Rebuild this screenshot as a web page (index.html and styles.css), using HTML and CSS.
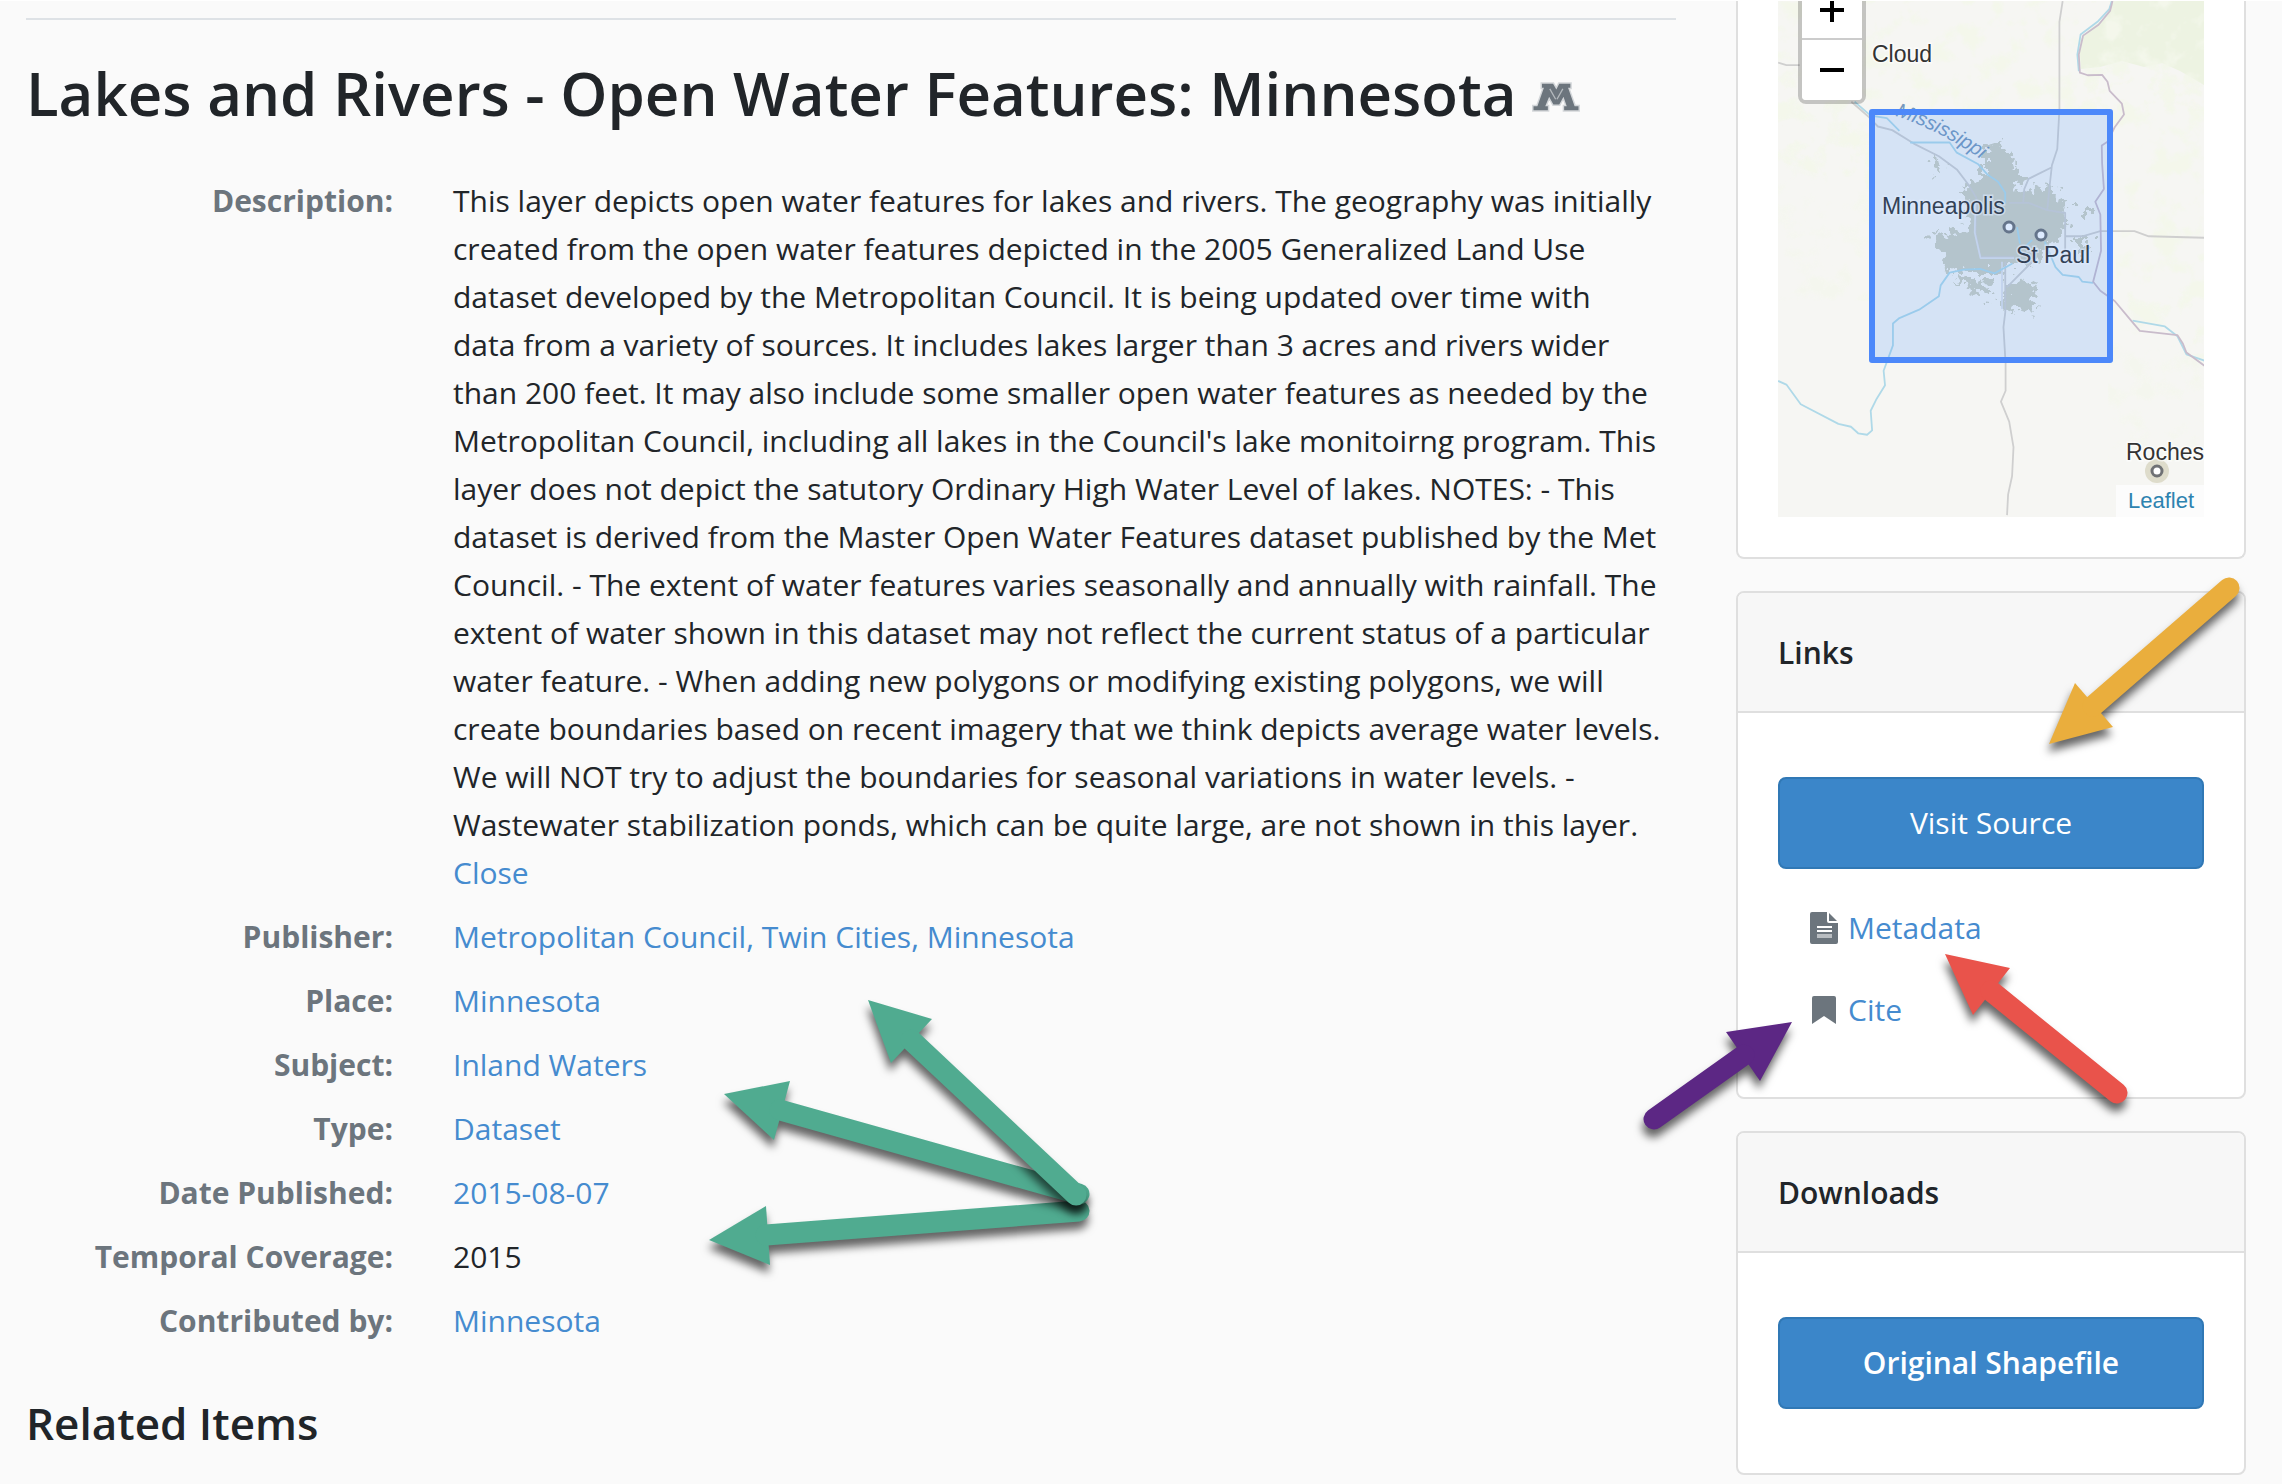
FILE: index.html
```html
<!DOCTYPE html>
<html lang="en">
<head>
<meta charset="utf-8">
<title>Lakes and Rivers - Open Water Features: Minnesota</title>
<link rel="stylesheet" href="styles.css">
</head>
<body>
<div class="page">
  <main class="record">
    <hr class="rule">
    <h1 class="title">Lakes and Rivers - Open Water Features: Minnesota
      <svg class="institution" viewBox="20 33 146 92" aria-hidden="true">
        <path class="institution-body" d="M50 38H84L94 56L103 38H137V51H130L150 107H162V120H118V107H126L116 78L103 102H85L72 78L60 107H68V120H24V107H36L56 51H50Z"/>
        <path class="institution-seam" d="M74 54L92 86M114 54L96 86"/>
      </svg>
    </h1>
    <dl class="fields">
      <dt>Description:</dt>
      <dd>This layer depicts open water features for lakes and rivers. The geography was initially created from the open water features depicted in the 2005 Generalized Land Use dataset developed by the Metropolitan Council. It is being updated over time with <span class="together">data from</span> a variety of sources. It includes lakes larger than 3 acres and rivers wider than 200 feet. It may also include some smaller open water features as needed by the Metropolitan Council, including all lakes in the Council's lake monitoirng program. This layer does not depict the satutory Ordinary High Water Level of lakes. NOTES: - This dataset is derived from the Master Open Water Features dataset published by the Met Council. - The extent of water features varies seasonally and annually with rainfall. The extent of water shown in this dataset may not reflect the current status of a particular water feature. - When adding new polygons or modifying existing polygons, we will create boundaries based on recent imagery that we think depicts average water levels. We will NOT try to adjust the boundaries for seasonal variations in water levels. - Wastewater stabilization ponds, which can be quite large, are not shown in this layer. <a class="close" href="#">Close</a></dd>
      <dt>Publisher:</dt>
      <dd><a href="#">Metropolitan Council, Twin Cities, Minnesota</a></dd>
      <dt>Place:</dt>
      <dd><a href="#">Minnesota</a></dd>
      <dt>Subject:</dt>
      <dd><a href="#">Inland Waters</a></dd>
      <dt>Type:</dt>
      <dd><a href="#">Dataset</a></dd>
      <dt>Date Published:</dt>
      <dd><a href="#">2015-08-07</a></dd>
      <dt>Temporal Coverage:</dt>
      <dd>2015</dd>
      <dt>Contributed by:</dt>
      <dd><a href="#">Minnesota</a></dd>
    </dl>
    <h2 class="related">Related Items</h2>
  </main>

  <aside class="sidebar">
    <section class="card card-map">
      <div class="map">
        <svg class="tiles" viewBox="0 0 426 516" preserveAspectRatio="xMinYMin slice" role="img" aria-label="Map of the Minneapolis and St Paul area">
          <defs>
            <filter id="grain" x="0" y="0" width="100%" height="100%">
              <feTurbulence type="fractalNoise" baseFrequency="0.04" numOctaves="4" seed="8"/>
              <feColorMatrix values="0 0 0 0 0.90  0 0 0 0 0.93  0 0 0 0 0.83  5 0 0 0 -2.5"/>
              <feComposite operator="in" in2="SourceGraphic"/>
            </filter>
            <filter id="ragged" x="-20%" y="-20%" width="140%" height="140%">
              <feTurbulence type="fractalNoise" baseFrequency="0.12" numOctaves="3" seed="4"/>
              <feDisplacementMap in="SourceGraphic" scale="30" xChannelSelector="R" yChannelSelector="G"/>
            </filter>
            <path id="river-label" d="M117 115Q165 130 214 166"/>
          </defs>
          <rect width="426" height="516" fill="#f6f6f3"/>
          <path filter="url(#grain)" d="M0 0H426V360L340 300L330 110H94V190L0 160Z"/>
          <path fill="#edf3e2" d="M336 0H426V84L402 70L384 62L366 66L344 60L322 66L303 68L301 40L312 28L326 18Z"/>
          <path filter="url(#grain)" d="M300 0H426V110H300Z"/>
          <path opacity=".5" filter="url(#grain)" d="M0 60H94V300H0ZM330 290H426V460H330Z"/>
          <g filter="url(#ragged)" fill="#ced0c2">
            <path d="M206 150L224 142L244 172L238 192L262 184L284 196L290 228L268 246L256 262L230 262L222 272L188 272L168 266L158 240L166 232L192 226L190 200L180 188L206 178Z"/>
            <path d="M238 278L262 284L252 300L256 312L238 306L228 312L222 296ZM174 274L196 282L214 280L212 296L196 290L184 284ZM296 238H310V248H296Z"/>
            <path d="M158 154L164 162L160 176L155 166ZM150 230L160 226L156 236ZM304 204H316V214H304Z"/>
          </g>
          <g transform="translate(-58 -1) scale(.3588 .3635)" fill="none" stroke-width="5" stroke-linejoin="round">
            <path stroke="#cfcfcf" d="M162 172L185 179H222M366 280L415 322L440 348L480 358L540 395L610 430L660 466L690 505L715 545M955 3L946 60V300L940 410L925 455L920 500L912 578M925 460L860 492L848 520L845 560M805 558H860L912 578L962 586V690M962 650H1010L1060 636H1155L1195 650L1350 654M715 545L712 640L726 706H820M795 720V860L790 900L796 1000V1075L783 1105L806 1160L818 1230L814 1310L803 1360L800 1417M880 710L800 790"/>
            <path stroke="#dfe2ea" d="M712 560L710 640L726 710H820M786 720V850"/>
            <path stroke="#afd9e8" d="M1092 3L1085 25L1052 60L1005 95L996 150L1000 196M375 280L420 318L465 325L500 360M530 392H640L660 420L720 452L745 480L775 500L795 530V560M828 625L836 670M870 660L850 680M162 1048L185 1058L225 1112L330 1166L365 1174L385 1192L410 1196L424 1184L420 1130L435 1100L460 1060L456 1020L482 950V890L500 875L555 852L610 815L615 785L640 750L680 742L725 740L765 752L815 725M905 665L935 735L955 756L1000 762L1010 775L1040 778M1150 882L1240 898L1275 925L1300 975L1350 992"/>
            <path stroke="#c9bccb" d="M1094 3L1087 30L1055 68L1012 98L1000 150L1003 200L1025 207L1065 206L1080 225L1086 250L1120 285L1126 315L1100 350L1080 390L1064 400L1065 450L1070 520L1046 555L1060 590L1062 690L1040 775L1060 800L1100 828L1140 875L1170 910L1275 922L1290 945L1300 970L1350 1006"/>
          </g>
          <circle cx="379" cy="470" r="12" fill="#dedccb"/>
          <g fill="#fff" stroke="#6f7174" stroke-width="3">
            <circle cx="231" cy="226" r="5"/>
            <circle cx="263" cy="234" r="5"/>
            <circle cx="379" cy="470" r="5"/>
          </g>
          <g class="places">
            <text x="94" y="61">Cloud</text>
            <text x="104" y="213">Minneapolis</text>
            <text x="238" y="262">St Paul</text>
            <text x="348" y="459">Roches</text>
          </g>
          <text class="river"><textPath href="#river-label">Mississippi</textPath></text>
          <rect x="94" y="111" width="238" height="248" fill="#3388ff" fill-opacity=".17" stroke="#4c88fa" stroke-width="6" stroke-linejoin="round"/>
        </svg>
        <div class="zoom">
          <button class="zoom-button" type="button" aria-label="Zoom in"><svg viewBox="0 0 24 24"><path d="M0 12H24M12 0V24"/></svg></button>
          <button class="zoom-button" type="button" aria-label="Zoom out"><svg viewBox="0 0 24 24"><path d="M0 12H24"/></svg></button>
        </div>
        <a class="attribution" href="#">Leaflet</a>
      </div>
    </section>

    <section class="card">
      <h2 class="card-header">Links</h2>
      <div class="card-body">
        <button class="button" type="button">Visit Source</button>
        <ul class="links">
          <li>
            <svg class="icon" viewBox="0 0 28 32" aria-hidden="true"><path fill="#6c757d" fill-rule="evenodd" d="M2 0H17V9Q17 11 19 11H28V30Q28 32 26 32H2Q0 32 0 30V2Q0 0 2 0ZM7 14V16H22V14ZM7 18V20H22V18Z"/><path fill="#b9bdc1" d="M7 22H22V26H7Z"/><path fill="#6c757d" d="M19 1L27 9H19Z"/></svg>
            <a href="#">Metadata</a>
          </li>
          <li>
            <svg class="icon" viewBox="0 0 28 32" aria-hidden="true"><path fill="#6c757d" d="M4 2H24Q26 2 26 4V30L14 22L2 30V4Q2 2 4 2Z"/></svg>
            <a href="#">Cite</a>
          </li>
        </ul>
      </div>
    </section>

    <section class="card">
      <h2 class="card-header">Downloads</h2>
      <div class="card-body card-body-even">
        <button class="button button-strong" type="button">Original Shapefile</button>
      </div>
    </section>
  </aside>

  <svg class="arrows" viewBox="0 0 2282 1484" preserveAspectRatio="xMinYMin meet" aria-hidden="true">
    <g class="arrow arrow-green"><path d="M709 1240L766 1206L770 1265Z"/><line x1="766" y1="1235" x2="1079" y2="1211"/></g>
    <g class="arrow arrow-green"><path d="M724 1094L790 1081L774 1140Z"/><line x1="780" y1="1110" x2="1079" y2="1194"/></g>
    <g class="arrow arrow-green"><path d="M868 1000L932 1019L891 1063Z"/><line x1="911" y1="1040" x2="1076" y2="1195"/></g>
    <g class="arrow arrow-yellow"><path d="M2049 744L2075 683L2113 727Z"/><line x1="2093" y1="706" x2="2229" y2="588"/></g>
    <g class="arrow arrow-red"><path d="M1945 954L2010 968L1973 1015Z"/><line x1="1991" y1="991" x2="2117" y2="1093"/></g>
    <g class="arrow arrow-purple"><path d="M1792 1022L1726 1032L1760 1081Z"/><line x1="1744" y1="1055" x2="1654" y2="1119"/></g>
  </svg>
</div>
</body>
</html>
```
FILE: styles.css
```css
* {
  box-sizing: border-box;
}

body {
  margin: 0;
  border-top: 1px solid #fff;
  background: #fafafa;
  color: #212529;
  font: 30px/48px "Open Sans", "Noto Sans", sans-serif;
}

a {
  color: #458bcf;
  text-decoration: none;
}

.page {
  position: relative;
  display: grid;
  grid-template-columns: minmax(0, 1fr) 510px;
  gap: 60px;
  align-items: start;
  padding: 0 36px 0 26px;
}

.rule {
  margin: 17px 0 0;
  border: 0;
  border-top: 2px solid #dee2e6;
}

.title {
  margin: 35px 0 0;
  font-size: 60px;
  line-height: 76px;
  font-weight: 600;
  white-space: nowrap;
}

.institution {
  width: 48px;
  height: 30px;
  vertical-align: 4px;
}

.institution-body {
  fill: #6c757d;
  stroke: #d3d6d9;
  stroke-width: 9px;
  paint-order: stroke;
}

.institution-seam {
  fill: none;
  stroke: #b4b9bd;
  stroke-width: 4px;
}

.fields {
  display: grid;
  grid-template-columns: 367px minmax(0, 1fr);
  column-gap: 60px;
  row-gap: 16px;
  margin: 46px 0 0;
}

.fields dt {
  color: #6c757d;
  font-weight: 700;
  text-align: right;
}

.fields dd {
  margin: 0;
}

.together {
  white-space: nowrap;
}

.close {
  display: block;
}

.related {
  margin: 49px 0 0;
  font-size: 44px;
  line-height: 58px;
  font-weight: 600;
}

.sidebar {
  display: grid;
  gap: 32px;
}

.card {
  border: 2px solid #dfdfdf;
  border-radius: 8px;
  background: #fff;
}

.card-map {
  padding: 0 40px 40px;
  border-top: 0;
  border-radius: 0 0 8px 8px;
}

.card-header {
  margin: 0;
  padding: 36px 40px 34px;
  border-bottom: 2px solid #dfdfdf;
  border-radius: 6px 6px 0 0;
  background: #f7f7f7;
  font-size: 30px;
  line-height: 48px;
  font-weight: 600;
}

.card-body {
  padding: 64px 40px 46px;
}

.card-body-even {
  padding-bottom: 64px;
}

.button {
  display: block;
  width: 100%;
  padding: 20px;
  border: 2px solid #3078b5;
  border-radius: 8px;
  background: #3b86c9;
  color: #fff;
  font: inherit;
}

.button-strong {
  font-weight: 600;
}

.links {
  margin: 18px 0 0;
  padding: 0;
  list-style: none;
}

.links li {
  display: flex;
  align-items: center;
  gap: 10px;
  padding: 17px 32px;
}

.icon {
  width: 28px;
  height: 32px;
}

.map {
  position: relative;
  height: 516px;
  overflow: hidden;
}

.tiles {
  display: block;
  width: 100%;
  height: 100%;
}

.places {
  fill: #333;
  stroke: #fff;
  stroke-width: 3px;
  stroke-opacity: .6;
  paint-order: stroke;
  font: 23px "Liberation Sans", Arial, sans-serif;
}

.river {
  fill: #7699bd;
  font: italic 20px "Liberation Sans", Arial, sans-serif;
}

.zoom {
  position: absolute;
  top: -23px;
  left: 20px;
  width: 68px;
  border: 4px solid rgba(0, 0, 0, .2);
  border-radius: 8px;
}

.zoom-button {
  display: grid;
  place-items: center;
  width: 60px;
  height: 56px;
  padding: 0;
  border: 0;
  background: #fff;
}

.zoom-button + .zoom-button {
  height: 62px;
  border-top: 2px solid #ccc;
  border-radius: 0 0 4px 4px;
}

.zoom-button svg {
  width: 24px;
  height: 24px;
  fill: none;
  stroke: #000;
  stroke-width: 4px;
}

.attribution {
  position: absolute;
  right: 0;
  bottom: 0;
  padding: 0 10px 0 12px;
  background: rgba(255, 255, 255, .7);
  color: #2d83b0;
  font: 22px/32px "Liberation Sans", Arial, sans-serif;
}

.arrows {
  position: absolute;
  top: -1px;
  left: 0;
  width: 100%;
  pointer-events: none;
}

.arrow {
  fill: currentColor;
  stroke: currentColor;
  stroke-width: 0;
  filter: drop-shadow(-1px 8px 4px rgba(0, 0, 0, .6));
}

.arrow line {
  stroke-width: 21px;
  stroke-linecap: round;
}

.arrow-green {
  color: #50ab90;
}

.arrow-yellow {
  color: #eaae3d;
}

.arrow-red {
  color: #e9534b;
}

.arrow-purple {
  color: #5c2784;
}
```
